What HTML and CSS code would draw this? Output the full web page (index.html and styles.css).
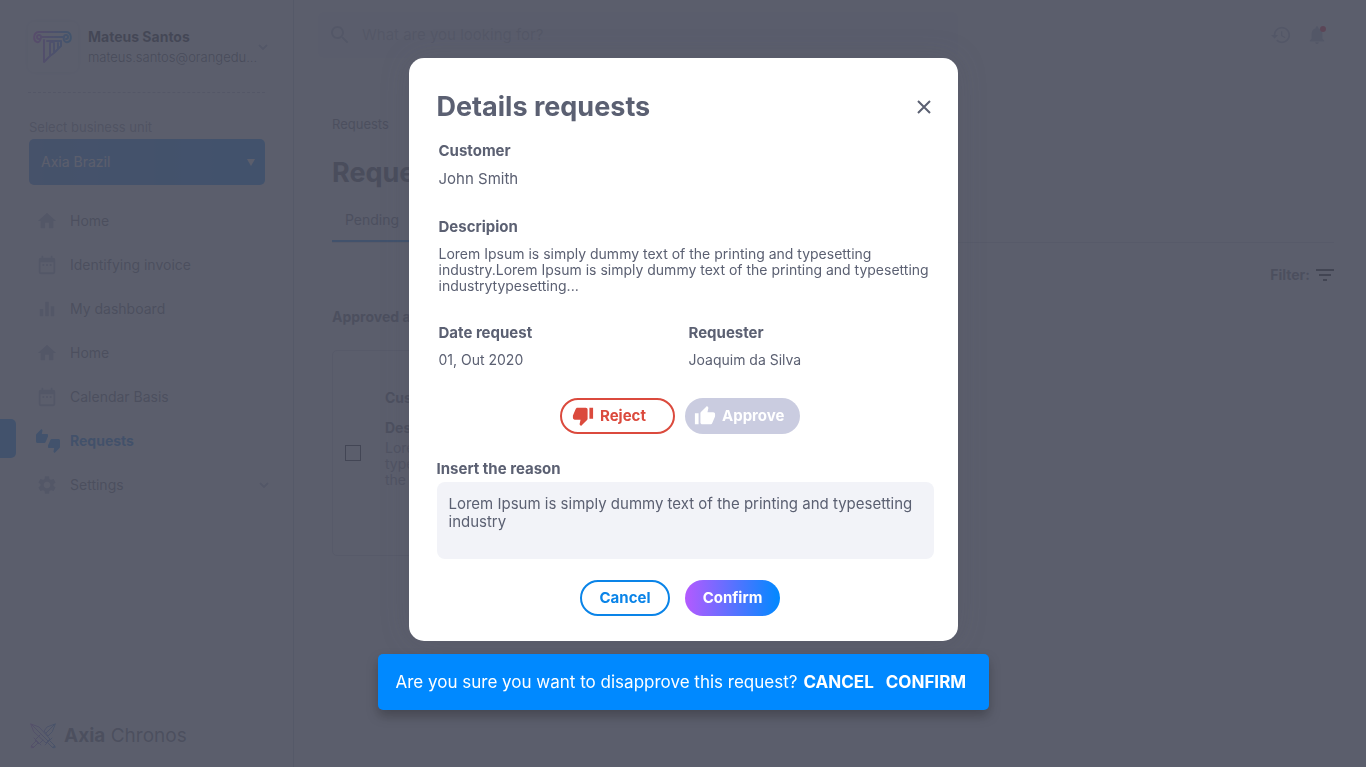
FILE: index.html
```html
<!DOCTYPE html>
<html lang="en">
<head>
<meta charset="utf-8">
<meta name="viewport" content="width=device-width, initial-scale=1">
<title>Axia Chronos – Requests</title>
<link rel="stylesheet" href="styles.css">
</head>
<body>
<div class="app">
  <aside class="sidebar">
    <div class="profile">
      <div class="profile-logo">
        <svg width="40" height="34" viewBox="0 0 40 34" fill="none" stroke="url(#brand)" stroke-width="2" stroke-linecap="round" stroke-linejoin="round">
          <defs><linearGradient id="brand" x1="0" y1="0" x2="40" y2="0" gradientUnits="userSpaceOnUse"><stop stop-color="#e04cf0"/><stop offset="1" stop-color="#00a0ff"/></linearGradient></defs>
          <path d="M6 9a2 2 0 1 1 2-2c0 3-2 6-4 5C0 11 0 2 6 2h27c6 0 6 9 2 10-3 1-5-2-4-5a2 2 0 1 1 2 2M9 7h21M11 10v22l6-6V14c0-3 4-3 4 0v9l4-4v-6M14 11h14v5l-3 3M17 26l4-3"/>
        </svg>
      </div>
      <div class="profile-text">
        <strong class="profile-name">Mateus Santos</strong>
        <span class="profile-mail">mateus.santos@orangedu...</span>
      </div>
      <button class="icon-button profile-toggle" type="button" aria-label="Open profile menu">
        <svg width="10" height="6" viewBox="0 0 10 6" fill="none" stroke="currentColor" stroke-width="2"><path d="M1 1l4 4 4-4"/></svg>
      </button>
    </div>
    <div class="unit">
      <label class="unit-label" for="unit">Select business unit</label>
      <div class="unit-field">
        <select class="unit-select" id="unit"><option>Axia Brazil</option></select>
        <svg class="unit-arrow" width="8" height="7" viewBox="0 0 8 7" fill="#fff"><path d="M0 0h8L4 7z"/></svg>
      </div>
    </div>
    <nav class="nav">
      <a class="nav-item" href="#"><svg class="nav-icon" viewBox="0 0 24 24"><path d="M10 20v-6h4v6h5v-8h3L12 3 2 12h3v8z"/></svg>Home</a>
      <a class="nav-item" href="#"><svg class="nav-icon" viewBox="0 0 24 24"><path d="M9 11H7v2h2v-2zm4 0h-2v2h2v-2zm4 0h-2v2h2v-2zm2-7h-1V2h-2v2H8V2H6v2H5c-1.11 0-2 .9-2 2v14c0 1.1.89 2 2 2h14c1.1 0 2-.9 2-2V6c0-1.1-.9-2-2-2zm0 16H5V9h14v11z"/></svg>Identifying invoice</a>
      <a class="nav-item" href="#"><svg class="nav-icon" viewBox="0 0 24 24"><path d="M10 20h4V4h-4v16zm-6 0h4v-8H4v8zM16 9v11h4V9h-4z"/></svg>My dashboard</a>
      <a class="nav-item" href="#"><svg class="nav-icon" viewBox="0 0 24 24"><path d="M10 20v-6h4v6h5v-8h3L12 3 2 12h3v8z"/></svg>Home</a>
      <a class="nav-item" href="#"><svg class="nav-icon" viewBox="0 0 24 24"><path d="M9 11H7v2h2v-2zm4 0h-2v2h2v-2zm4 0h-2v2h2v-2zm2-7h-1V2h-2v2H8V2H6v2H5c-1.11 0-2 .9-2 2v14c0 1.1.89 2 2 2h14c1.1 0 2-.9 2-2V6c0-1.1-.9-2-2-2zm0 16H5V9h14v11z"/></svg>Calendar Basis</a>
      <a class="nav-item nav-item-active" href="#" aria-current="page"><svg class="nav-icon nav-icon-wide" viewBox="0 0 24 24"><path d="M12 6c0-.55-.45-1-1-1H5.82l.66-3.18.02-.23c0-.31-.13-.59-.33-.8L5.38 0 .44 4.94C.17 5.21 0 5.59 0 6v6.5c0 .83.67 1.5 1.5 1.5h6.75c.62 0 1.15-.38 1.38-.91l2.26-5.29c.07-.17.11-.36.11-.55V6zm10.5 4h-6.75c-.62 0-1.15.38-1.38.91l-2.26 5.29c-.07.17-.11.36-.11.55V18c0 .55.45 1 1 1h5.18l-.66 3.18-.02.24c0 .31.13.59.33.8l.79.78 4.94-4.94c.27-.27.44-.65.44-1.06v-6.5c0-.83-.67-1.5-1.5-1.5z"/></svg>Requests</a>
      <a class="nav-item" href="#"><svg class="nav-icon" viewBox="0 0 24 24"><path d="M19.14 12.94c.04-.3.06-.61.06-.94 0-.32-.02-.64-.07-.94l2.03-1.58c.18-.14.23-.41.12-.61l-1.92-3.32c-.12-.22-.37-.29-.59-.22l-2.39.96c-.5-.38-1.03-.7-1.62-.94l-.36-2.54c-.04-.24-.24-.41-.48-.41h-3.84c-.24 0-.43.17-.47.41l-.36 2.54c-.59.24-1.13.57-1.62.94l-2.39-.96c-.22-.08-.47 0-.59.22L2.74 8.87c-.12.21-.08.47.12.61l2.03 1.58c-.05.3-.09.63-.09.94s.02.64.07.94l-2.03 1.58c-.18.14-.23.41-.12.61l1.92 3.32c.12.22.37.29.59.22l2.39-.96c.5.38 1.03.7 1.62.94l.36 2.54c.05.24.24.41.48.41h3.84c.24 0 .44-.17.47-.41l.36-2.54c.59-.24 1.13-.56 1.62-.94l2.39.96c.22.08.47 0 .59-.22l1.92-3.32c.12-.22.07-.47-.12-.61l-2.01-1.58zM12 15.6c-1.98 0-3.6-1.62-3.6-3.6s1.62-3.6 3.6-3.6 3.6 1.62 3.6 3.6-1.62 3.6-3.6 3.6z"/></svg>Settings
        <svg class="nav-chevron" width="10" height="6" viewBox="0 0 10 6" fill="none" stroke="currentColor" stroke-width="2"><path d="M1 1l4 4 4-4"/></svg></a>
    </nav>
    <div class="product">
      <svg width="26" height="26" viewBox="0 0 26 26" fill="none" stroke="url(#swords)" stroke-width="1" stroke-linejoin="round" stroke-linecap="round">
        <defs><linearGradient id="swords" x1="0" y1="0" x2="26" y2="0" gradientUnits="userSpaceOnUse"><stop stop-color="#c070e0"/><stop offset="1" stop-color="#4090e0"/></linearGradient></defs>
        <path d="M1 1l8 3 11 12-4 4L4 9zM1 1l17 17M25 1l-8 3-3 4 4 5 4-4zM25 1l-9 9M10 12l-5 5 4 4 4-4M22 15l-7 7M20 18l5 5-2 2-5-5M4 15l7 7M6 18l-5 5 2 2 5-5"/>
        <circle cx="2" cy="24" r="1"/><circle cx="24" cy="24" r="1"/>
      </svg>
      <span><strong>Axia</strong> Chronos</span>
    </div>
  </aside>
  <div class="main">
    <header class="topbar">
      <div class="search">
        <svg class="search-icon" width="24" height="24" viewBox="0 0 24 24"><path d="M15.5 14h-.79l-.28-.27C15.41 12.59 16 11.11 16 9.5 16 5.91 13.09 3 9.5 3S3 5.91 3 9.5 5.91 16 9.5 16c1.61 0 3.09-.59 4.23-1.57l.27.28v.79l5 4.99L20.49 19l-4.99-5zm-6 0C7.01 14 5 11.99 5 9.5S7.01 5 9.5 5 14 7.01 14 9.5 11.99 14 9.5 14z"/></svg>
        <input class="search-input" type="search" aria-label="Search" placeholder="What are you looking for?">
      </div>
      <div class="topbar-actions">
        <button class="icon-button" type="button" aria-label="History"><svg width="22" height="22" viewBox="0 0 24 24" fill="currentColor"><path d="M13 3c-4.97 0-9 4.03-9 9H1l3.89 3.89.07.14L9 12H6c0-3.87 3.13-7 7-7s7 3.13 7 7-3.13 7-7 7c-1.93 0-3.68-.79-4.94-2.06l-1.42 1.42C8.27 19.99 10.51 21 13 21c4.97 0 9-4.03 9-9s-4.03-9-9-9zm-1 5v5l4.28 2.54.72-1.21-3.5-2.08V8H12z"/></svg></button>
        <button class="icon-button bell" type="button" aria-label="Notifications"><svg width="22" height="22" viewBox="0 0 24 24" fill="currentColor"><path d="M12 22c1.1 0 2-.9 2-2h-4c0 1.1.89 2 2 2zm6-6v-5c0-3.07-1.64-5.64-4.5-6.32V4c0-.83-.67-1.5-1.5-1.5s-1.5.67-1.5 1.5v.68C7.63 5.36 6 7.92 6 11v5l-2 2v1h16v-1l-2-2z"/></svg><span class="bell-dot"></span></button>
      </div>
    </header>
    <main class="content">
      <a class="crumb" href="#">Requests</a>
      <h1 class="page-title">Requests</h1>
      <div class="tabs"><button class="tab" type="button">Pending</button></div>
      <div class="filter-row">
        <button class="filter" type="button">Filter:
          <svg width="18" height="12" viewBox="0 0 18 12" fill="#000"><path d="M0 0h18v2H0zM3 5h12v2H3zM7 10h4v2H7z"/></svg>
        </button>
      </div>
      <h2 class="list-title">Approved all</h2>
      <article class="card">
        <input class="card-check" type="checkbox" aria-label="Select request">
        <div class="card-text">
          <strong>Customer</strong>
          <strong>Descripion</strong>
          <p class="card-copy">Lorem Ipsum is simply<br>typesetting industry<br>the printing</p>
        </div>
      </article>
    </main>
  </div>
</div>

<div class="backdrop">
  <section class="modal" role="dialog" aria-modal="true" aria-labelledby="modal-title">
    <header class="modal-head">
      <h2 class="modal-title" id="modal-title">Details requests</h2>
      <button class="close" type="button" aria-label="Close"><svg width="14" height="14" viewBox="0 0 14 14" fill="none" stroke="currentColor" stroke-width="2"><path d="M1 1l12 12M13 1L1 13"/></svg></button>
    </header>
    <dl class="fields">
      <div class="field field-wide"><dt>Customer</dt><dd class="value-large">John Smith</dd></div>
      <div class="field field-wide"><dt>Descripion</dt><dd class="value-copy">Lorem Ipsum is simply dummy text of the printing and typesetting<br>industry.Lorem Ipsum is simply dummy text of the printing and typesetting<br>industrytypesetting...</dd></div>
      <div class="field"><dt>Date request</dt><dd>01, Out 2020</dd></div>
      <div class="field"><dt>Requester</dt><dd>Joaquim da Silva</dd></div>
    </dl>
    <div class="actions">
      <button class="pill pill-reject" type="button"><svg width="22" height="22" viewBox="0 0 24 24" fill="currentColor"><path d="M15 3H6c-.83 0-1.54.5-1.84 1.22l-3.02 7.05c-.09.23-.14.47-.14.73v2c0 1.1.9 2 2 2h6.31l-.95 4.57-.03.32c0 .41.17.79.44 1.06L9.83 23l6.59-6.59c.36-.36.58-.86.58-1.41V5c0-1.1-.9-2-2-2zm4 0v12h4V3h-4z"/></svg>Reject</button>
      <button class="pill pill-approve" type="button"><svg width="22" height="22" viewBox="0 0 24 24" fill="currentColor"><path d="M1 21h4V9H1v12zm22-11c0-1.1-.9-2-2-2h-6.31l.95-4.57.03-.32c0-.41-.17-.79-.44-1.06L14.17 1 7.59 7.59C7.22 7.95 7 8.45 7 9v10c0 1.1.9 2 2 2h9c.83 0 1.54-.5 1.84-1.22l3.02-7.05c.09-.23.14-.47.14-.73v-2z"/></svg>Approve</button>
    </div>
    <label class="reason-label" for="reason">Insert the reason</label>
    <textarea class="reason" id="reason">Lorem Ipsum is simply dummy text of the printing and typesetting industry</textarea>
    <div class="actions actions-end">
      <button class="pill pill-cancel" type="button">Cancel</button>
      <button class="pill pill-confirm" type="button">Confirm</button>
    </div>
  </section>
  <div class="snackbar" role="alert">
    <span class="snackbar-text">Are you sure you want to disapprove this request?</span>
    <div class="snackbar-actions">
      <button class="snackbar-button" type="button">CANCEL</button>
      <button class="snackbar-button" type="button">CONFIRM</button>
    </div>
  </div>
</div>
</body>
</html>
```

FILE: styles.css
```css
:root {
  --ink: #5b6072;
  --blue: #0089ff;
  --muted: #686a76;
  --soft: #b0b4cc;
}

* { box-sizing: border-box; }

body {
  margin: 0;
  font-family: Inter, "Open Sans", sans-serif;
  font-size: 14px;
  line-height: 16px;
  color: var(--muted);
}

h1, h2, p, dl, dd { margin: 0; }

button, input, select, textarea { font: inherit; color: inherit; }

button { cursor: pointer; border: 0; background: none; padding: 0; }

a { color: inherit; text-decoration: none; }

/* Page */
.app { display: flex; min-height: 100vh; background: #fff; }

.sidebar {
  display: flex;
  flex-direction: column;
  flex: 0 0 294px;
  min-width: 0;
  border-right: 1px solid #c4c6d4;
}

.profile {
  display: flex;
  align-items: center;
  gap: 10px;
  margin: 0 28px;
  padding: 22px 0 20px;
  border-bottom: 1px dashed #b8bac8;
}

.profile-logo {
  display: grid;
  place-items: center;
  flex: 0 0 50px;
  height: 50px;
  border-radius: 6px;
  box-shadow: 0 0 6px #d4d6e0;
}

.profile-text { display: flex; flex-direction: column; gap: 4px; flex: 1; min-width: 0; }
.profile-name { color: #1c1c24; }
.profile-mail { font-size: 13px; font-weight: 300; white-space: nowrap; color: #40424c; }
.profile-toggle { margin-right: -3px; }

.icon-button { display: flex; color: var(--soft); }

.unit { display: flex; flex-direction: column; gap: 4px; margin: 26px 28px 14px 29px; }
.unit-label { font-size: 13px; color: #8c8e9a; }
.unit-field { display: flex; position: relative; }

.unit-select {
  appearance: none;
  width: 100%;
  height: 46px;
  padding: 0 12px;
  border: 0;
  border-radius: 5px;
  background: linear-gradient(90deg, #2a80e8, #0089ff);
  color: #fff;
}

.unit-arrow { position: absolute; right: 10px; top: 20px; pointer-events: none; }

.nav { display: flex; flex-direction: column; }

.nav-item {
  display: flex;
  align-items: center;
  gap: 12px;
  height: 44px;
  padding: 0 24px 0 36px;
  position: relative;
}

.nav-icon { width: 22px; height: 22px; fill: var(--soft); }
.nav-icon-wide { width: 24px; height: 24px; margin-right: -2px; fill: var(--blue); }
.nav-item-active { color: #0078e8; font-weight: 700; }

.nav-item-active::before {
  content: "";
  position: absolute;
  left: 0;
  top: 0;
  width: 16px;
  height: 39px;
  border-radius: 0 5px 5px 0;
  background: var(--blue);
}

.nav-chevron { margin-left: auto; color: var(--soft); }

.product {
  display: flex;
  align-items: center;
  gap: 8px;
  margin-top: auto;
  padding: 0 30px 18px;
  font-size: 19px;
  line-height: 26px;
}

.main { flex: 1; min-width: 0; background: #f8f8fb; }

.topbar {
  display: flex;
  justify-content: space-between;
  padding: 12px 38px 12px 24px;
  background: #fff;
}

.search {
  display: flex;
  align-items: center;
  gap: 10px;
  flex: 0 1 640px;
  height: 46px;
  padding: 0 10px;
  border-radius: 5px;
  background: #f6f6fa;
}

.search-icon { flex: none; fill: var(--soft); }

.search-input { flex: 1; padding: 0; border: 0; background: none; font-size: 15px; }
.search-input::placeholder { color: #b8bac8; }

.topbar-actions { display: flex; align-items: center; gap: 14px; }
.bell { position: relative; }

.bell-dot {
  position: absolute;
  top: 2px;
  right: 2px;
  width: 6px;
  height: 6px;
  border-radius: 50%;
  background: #ff1030;
}

.content { padding: 46px 32px 24px 38px; }
.crumb { display: block; font-size: 13px; }
.page-title { margin-top: 24px; font-size: 27px; line-height: 34px; color: #50525e; }
.tabs { display: flex; margin-top: 22px; border-bottom: 1px solid #d6d8e0; }
.tab { width: 116px; padding: 0 13px 12px; border-bottom: 2px solid var(--blue); text-align: left; }
.filter-row { display: flex; justify-content: flex-end; margin-top: 24px; }
.filter { display: flex; align-items: center; gap: 6px; font-weight: 700; }
.list-title { margin-top: 26px; font-size: 14px; line-height: 16px; }

.card {
  display: flex;
  align-items: center;
  gap: 24px;
  max-width: 600px;
  min-height: 206px;
  margin-top: 25px;
  padding: 0 12px;
  border: 1px solid #d0d2dc;
  border-radius: 5px;
}

.card-check { appearance: none; flex: none; width: 16px; height: 16px; margin: 0; border: 1px solid #101014; }
.card-text { display: flex; flex-direction: column; gap: 14px; margin-bottom: 28px; }
.card-copy { margin-top: -10px; color: #8c8e9a; }

/* Dialog layer */
.backdrop {
  position: fixed;
  inset: 0;
  display: flex;
  flex-direction: column;
  align-items: center;
  gap: 13px;
  padding: 58px 16px 16px;
  overflow: auto;
  background: rgba(73, 76, 92, .9);
}

.modal {
  flex: none;
  display: flex;
  flex-direction: column;
  width: 100%;
  max-width: 549px;
  padding: 32px 24px 25px 28px;
  border-radius: 15px;
  background: #fff;
  color: var(--ink);
  box-shadow: 0 0 30px rgba(73, 76, 92, .2);
}

.modal-head { display: flex; align-items: center; justify-content: space-between; }
.modal-title { font-size: 27px; line-height: 34px; }
.close { display: flex; padding: 3px; }

.fields {
  display: grid;
  grid-template-columns: 1fr 1fr;
  gap: 30px 5px;
  margin-top: 18px;
  padding-left: 2px;
}

.field { display: flex; flex-direction: column; gap: 10px; }
.field-wide { grid-column: 1 / -1; }
.field dt { font-size: 15px; line-height: 18px; font-weight: 700; }
.field .value-large { font-size: 15px; line-height: 18px; }
.value-copy { white-space: nowrap; }

.actions { display: flex; justify-content: center; gap: 10px; margin: 30px 10px 26px 0; }

.pill {
  display: flex;
  align-items: center;
  gap: 6px;
  height: 36px;
  border: 2px solid transparent;
  border-radius: 18px;
  font-size: 15px;
  font-weight: 700;
}

.pill-reject { width: 115px; padding-left: 10px; border-color: #db4a3d; color: #db4a3d; }
.pill-approve { width: 115px; padding-left: 9px; border: 0; background: #cacce0; color: #fff; }

.reason-label { font-size: 15px; line-height: 18px; font-weight: 700; }

.reason {
  height: 77px;
  margin: 4px 0 0;
  padding: 13px 12px;
  border: 0;
  border-radius: 8px;
  background: #f2f3f8;
  font-size: 15px;
  line-height: 18px;
  resize: none;
}

.actions-end { gap: 15px; margin: 21px 10px 0 0; }
.pill-cancel { justify-content: center; width: 90px; border-color: #0a84e8; color: #0a84e8; }

.pill-confirm {
  justify-content: center;
  width: 95px;
  border: 0;
  background: linear-gradient(90deg, #b45aff, #0089ff);
  color: #fff;
}

.snackbar {
  flex: none;
  display: flex;
  align-items: center;
  gap: 6px;
  width: 100%;
  max-width: 611px;
  min-height: 56px;
  padding: 0 18px;
  border-radius: 5px;
  background: var(--blue);
  color: #fff;
  font-size: 17px;
  line-height: 20px;
  box-shadow: 0 6px 12px rgba(0, 0, 0, .25);
}

.snackbar-text { white-space: nowrap; }
.snackbar-actions { display: flex; gap: 12px; }
.snackbar-button { font-weight: 700; }
```
